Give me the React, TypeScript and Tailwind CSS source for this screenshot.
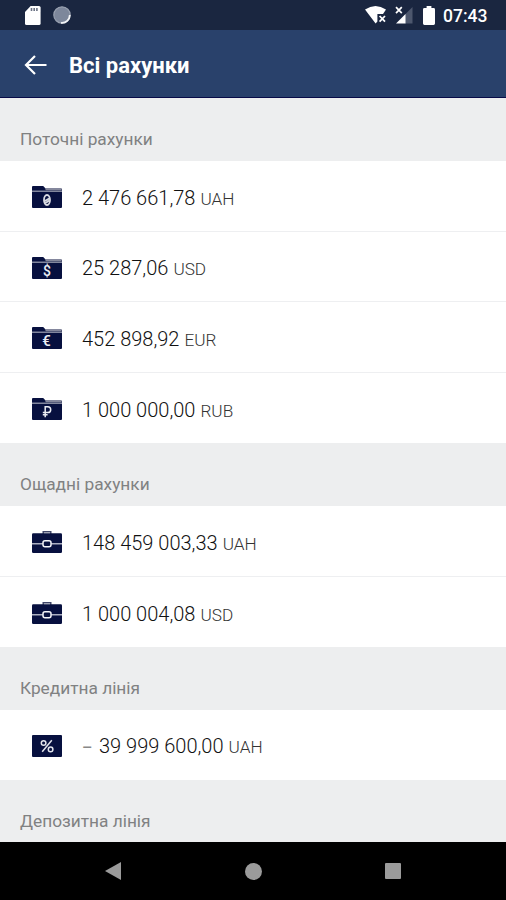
type IconKind = "hryvnia" | "dollar" | "euro" | "ruble" | "case" | "percent";

type Account = {
  icon: IconKind;
  negative?: boolean;
  amount: string;
  currency: string;
};

type Section = {
  title: string;
  accounts: Account[];
};

const sections: Section[] = [
  {
    title: "Поточні рахунки",
    accounts: [
      { icon: "hryvnia", amount: "2 476 661,78", currency: "UAH" },
      { icon: "dollar", amount: "25 287,06", currency: "USD" },
      { icon: "euro", amount: "452 898,92", currency: "EUR" },
      { icon: "ruble", amount: "1 000 000,00", currency: "RUB" },
    ],
  },
  {
    title: "Ощадні рахунки",
    accounts: [
      { icon: "case", amount: "148 459 003,33", currency: "UAH" },
      { icon: "case", amount: "1 000 004,08", currency: "USD" },
    ],
  },
  {
    title: "Кредитна лінія",
    accounts: [{ icon: "percent", negative: true, amount: "39 999 600,00", currency: "UAH" }],
  },
  { title: "Депозитна лінія", accounts: [] },
];

function Folder() {
  return (
    <>
      <path d="M0 4.8V1Q0 0 1 0H11.2L13.6 2.6H29Q30 2.6 30 3.4V4.8Z" fill="#07103f" />
      <path d="M12.8 2.4H29.6V4.2H14Z" fill="#85889c" />
      <path d="M0 5.4H30V21Q30 22 29 22H1Q0 22 0 21Z" fill="#07103f" />
    </>
  );
}

function AccountIcon({ icon }: { icon: IconKind }) {
  return (
    <svg className="h-[22px] w-[30px] shrink-0" viewBox="0 0 30 22">
      {icon !== "case" && icon !== "percent" && <Folder />}
      {icon === "hryvnia" && (
        <g fill="none" stroke="#d9dbe2" strokeWidth="1.8">
          <ellipse cx="15" cy="14" rx="3" ry="5" />
          <path d="M12.4 15.2L17.6 12.2M13 17.2L17.4 14.6" />
        </g>
      )}
      {icon === "dollar" && (
        <text x="15" y="19" fontSize="14" fontWeight="500" textAnchor="middle" fill="#eceef4">$</text>
      )}
      {icon === "euro" && (
        <text x="14.6" y="19" fontSize="15" fontWeight="500" textAnchor="middle" fill="#eceef4">€</text>
      )}
      {icon === "ruble" && (
        <path
          d="M13.2 19.2V8.8H15.8A2.9 2.9 0 0 1 15.8 14.6H10.8M10.8 16.8H15.6"
          fill="none"
          stroke="#eceef4"
          strokeWidth="1.5"
        />
      )}
      {icon === "case" && (
        <>
          <path d="M11.2 3V.7H18.8V3" fill="none" stroke="#3d4467" strokeWidth="1.4" />
          <rect y="2.2" width="30" height="19.8" rx="1.2" fill="#07103f" />
          <path d="M0 12.8H30" stroke="#d5d7e2" strokeWidth="1.2" />
          <rect x="11" y="9.8" width="8" height="6" rx="2" fill="#07103f" stroke="#f4f5f9" strokeWidth="1.5" />
        </>
      )}
      {icon === "percent" && (
        <>
          <rect width="30" height="22" rx="1" fill="#07103f" />
          <g fill="none" stroke="#e3e5ec" strokeWidth="1.5">
            <path d="M19.8 5.2L10.2 16.8" />
            <circle cx="11.6" cy="8" r="2.3" />
            <circle cx="18.6" cy="14.4" r="2.3" />
          </g>
        </>
      )}
    </svg>
  );
}

function StatusBar() {
  return (
    <div className="flex h-[30px] items-center bg-[#1a2640] pr-[19px] pl-[25px]">
      <svg className="h-[19px] w-4" viewBox="0 0 16 19">
        <path d="M5.6 0H14Q15.6 0 15.6 1.6V17.4Q15.6 19 14 19H1.6Q0 19 0 17.4V6Z" fill="#fff" />
        <path d="M6.5 2V5M9.2 2V5M11.9 2V5" stroke="#6b7284" strokeWidth="1.6" />
      </svg>
      <svg className="ml-3 h-[18px] w-[18px]" viewBox="0 0 18 18">
        <circle cx="9" cy="9" r="8.2" fill="#7d879b" stroke="#98a0af" strokeWidth="1.2" />
        <path d="M16.8 9A7.8 7.8 0 0 1 8 16.8" fill="none" stroke="#f3f4f6" strokeWidth="1.8" />
      </svg>
      <svg className="ml-auto h-[18px] w-[22px]" viewBox="0 0 22 18">
        <path d="M0 3.6Q10.5-3.4 21 3.6L18 8H12.4V15.6L10.6 17.6Z" fill="#fff" />
        <path d="M14.6 10L20 15.6M20 10L14.6 15.6" stroke="#fff" strokeWidth="1.8" />
      </svg>
      <svg className="ml-2 h-[18px] w-[18px]" viewBox="0 0 18 18">
        <path d="M17.5 1V17.5H10V8.5Z" fill="#4d576d" />
        <path d="M10.5 8V17.5H1Z" fill="#fff" />
        <path d="M1 1.2L6.8 7.2M6.8 1.2L1 7.2" stroke="#fff" strokeWidth="1.7" />
      </svg>
      <svg className="ml-2.5 h-[19px] w-3" viewBox="0 0 12 19">
        <path d="M3.6 0H8.4V2H10.6Q12 2 12 3.4V17.6Q12 19 10.6 19H1.4Q0 19 0 17.6V3.4Q0 2 1.4 2H3.6Z" fill="#fff" />
      </svg>
      <span className="ml-2 w-11 pt-[3px] text-[17.5px] leading-none font-medium whitespace-nowrap text-white">07:43</span>
    </div>
  );
}

function AccountRow({ account }: { account: Account }) {
  return (
    <div className="flex h-[70.5px] items-center border-b border-[#eeeff1] bg-white pt-[3px] pl-8 last:border-b-0 only:h-[69.5px]">
      <AccountIcon icon={account.icon} />
      <p className="ml-5 flex items-baseline pt-0.5 text-[20px] leading-6 font-[350] whitespace-nowrap text-[#111]">
        {account.negative && <span className="w-[17px] text-base font-medium text-[#888]">–</span>}
        <span>{account.amount}</span>
        <span className="ml-[5px] text-[17.2px] text-[#333]">{account.currency}</span>
      </p>
    </div>
  );
}

export default function App() {
  return (
    <div className="flex h-[900px] w-[506px] flex-col overflow-hidden bg-[#edeeef] font-['Roboto',sans-serif]">
      <StatusBar />

      <header className="flex h-[68px] shrink-0 items-center border-b border-[#080b48] bg-[#29416b] pt-[3px] pl-6">
        <svg className="h-5 w-[23px]" viewBox="0 0 23 20" fill="none" stroke="#fff" strokeWidth="2.2">
          <path d="M22.5 10H2M11 1L2 10L11 19" />
        </svg>
        <h1 className="ml-[22px] pt-0.5 text-[22px] leading-7 font-bold text-white">Всі рахунки</h1>
      </header>

      <main className="min-h-0 flex-1 overflow-hidden">
        {sections.map((section) => (
          <section key={section.title}>
            <h2 className="flex h-[63px] items-end pb-2.5 pl-5 text-[17.3px] leading-6 text-[#808182]">
              {section.title}
            </h2>
            <div>
              {section.accounts.map((account) => (
                <AccountRow key={account.amount} account={account} />
              ))}
            </div>
          </section>
        ))}
      </main>

      {/* Android navigation */}
      <nav className="flex h-[58px] shrink-0 items-center justify-between bg-black pr-[105px] pl-[105px]">
        <svg className="h-[18px] w-4" viewBox="0 0 16 18">
          <path d="M16 0V18L0 9Z" fill="#9b9b9b" />
        </svg>
        <div className="h-[17px] w-[17px] rounded-full bg-[#9b9b9b]" />
        <div className="h-4 w-4 rounded-[1px] bg-[#9b9b9b]" />
      </nav>
    </div>
  );
}
